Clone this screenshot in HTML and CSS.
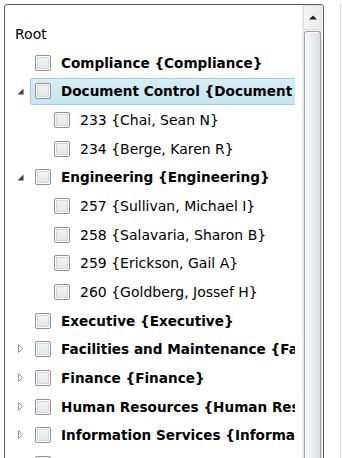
FILE: index.html
```html
<!DOCTYPE html>
<html lang="en">

<head>
    <meta charset="UTF-8">
    <meta name="viewport" content="width=device-width, initial-scale=1.0">
    <title>Tree</title>
    <link rel="stylesheet" href="styles.css">
</head>

<body>
    <div class="frame">
        <div class="tree">
            <div class="row root"><span class="label">Root</span></div>

            <div class="row lvl1">
                <span class="expander"></span>
                <span class="header"><span class="check"></span><span class="label bold">Compliance {Compliance}</span></span>
            </div>
            <div class="row lvl1">
                <span class="expander"><svg width="7" height="7" viewBox="0 0 7 7"><path d="M6.5 0.5 L6.5 6.5 L0.5 6.5 Z" fill="#3c3c3c" /></svg></span>
                <span class="header selected"><span class="check"></span><span class="label bold">Document Control {Document Control}</span></span>
            </div>
            <div class="row lvl2">
                <span class="expander"></span>
                <span class="header"><span class="check"></span><span class="label">233 {Chai, Sean N}</span></span>
            </div>
            <div class="row lvl2">
                <span class="expander"></span>
                <span class="header"><span class="check"></span><span class="label">234 {Berge, Karen R}</span></span>
            </div>
            <div class="row lvl1">
                <span class="expander"><svg width="7" height="7" viewBox="0 0 7 7"><path d="M6.5 0.5 L6.5 6.5 L0.5 6.5 Z" fill="#3c3c3c" /></svg></span>
                <span class="header"><span class="check"></span><span class="label bold">Engineering {Engineering}</span></span>
            </div>
            <div class="row lvl2">
                <span class="expander"></span>
                <span class="header"><span class="check"></span><span class="label">257 {Sullivan, Michael I}</span></span>
            </div>
            <div class="row lvl2">
                <span class="expander"></span>
                <span class="header"><span class="check"></span><span class="label">258 {Salavaria, Sharon B}</span></span>
            </div>
            <div class="row lvl2">
                <span class="expander"></span>
                <span class="header"><span class="check"></span><span class="label">259 {Erickson, Gail A}</span></span>
            </div>
            <div class="row lvl2">
                <span class="expander"></span>
                <span class="header"><span class="check"></span><span class="label">260 {Goldberg, Jossef H}</span></span>
            </div>
            <div class="row lvl1">
                <span class="expander"></span>
                <span class="header"><span class="check"></span><span class="label bold">Executive {Executive}</span></span>
            </div>
            <div class="row lvl1">
                <span class="expander"><svg width="7" height="10" viewBox="0 0 7 10"><path d="M1.5 0.5 L1.5 8.5 L5.5 4.5 Z" fill="#fff" stroke="#989898" /></svg></span>
                <span class="header"><span class="check"></span><span class="label bold">Facilities and Maintenance {Facilities and Maintenance}</span></span>
            </div>
            <div class="row lvl1">
                <span class="expander"><svg width="7" height="10" viewBox="0 0 7 10"><path d="M1.5 0.5 L1.5 8.5 L5.5 4.5 Z" fill="#fff" stroke="#989898" /></svg></span>
                <span class="header"><span class="check"></span><span class="label bold">Finance {Finance}</span></span>
            </div>
            <div class="row lvl1">
                <span class="expander"><svg width="7" height="10" viewBox="0 0 7 10"><path d="M1.5 0.5 L1.5 8.5 L5.5 4.5 Z" fill="#fff" stroke="#989898" /></svg></span>
                <span class="header"><span class="check"></span><span class="label bold">Human Resources {Human Resources}</span></span>
            </div>
            <div class="row lvl1">
                <span class="expander"><svg width="7" height="10" viewBox="0 0 7 10"><path d="M1.5 0.5 L1.5 8.5 L5.5 4.5 Z" fill="#fff" stroke="#989898" /></svg></span>
                <span class="header"><span class="check"></span><span class="label bold">Information Services {Information Services}</span></span>
            </div>
            <div class="row lvl1">
                <span class="expander"><svg width="7" height="10" viewBox="0 0 7 10"><path d="M1.5 0.5 L1.5 8.5 L5.5 4.5 Z" fill="#fff" stroke="#989898" /></svg></span>
                <span class="header"><span class="check"></span><span class="label bold">Marketing {Marketing}</span></span>
            </div>
        </div>

        <div class="scrollbar">
            <div class="scroll-btn"><svg width="8" height="5" viewBox="0 0 8 5"><path d="M0 4.5 L4 0.5 L8 4.5 Z" fill="#1e1e1e" /></svg></div>
            <div class="thumb"></div>
        </div>
    </div>
    <div class="side"></div>
</body>

</html>
```

FILE: styles.css
```css
body {
    margin: 0;
    padding: 4px 0 0 4px;
    display: flex;
    height: 458px;
    overflow: hidden;
    box-sizing: border-box;
    background: #fff;
    font-family: "DejaVu Sans", Verdana, sans-serif;
    font-size: 14px;
    color: #000;
}

.frame {
    display: flex;
    width: 320px;
    height: 480px;
    box-sizing: border-box;
    border: 1px solid #5c5c5c;
    border-radius: 3px 3px 0 0;
    background: #fff;
    flex-shrink: 0;
}

.side {
    width: 16px;
    border-right: 1px solid #dcdcdc;
}

.tree {
    width: 290px;
    margin-right: 7px;
    padding-top: 15.5px;
    overflow: hidden;
}

.row {
    display: flex;
    align-items: center;
    height: 28.7px;
    white-space: nowrap;
}

.root {
    padding-left: 10px;
    margin-top: -1px;
}

.lvl1 {
    padding-left: 6px;
}

.lvl2 {
    padding-left: 25px;
}

.expander {
    width: 19px;
    flex-shrink: 0;
    display: flex;
    align-items: center;
    justify-content: center;
}

.header {
    display: flex;
    align-items: center;
    height: 27px;
    box-sizing: border-box;
    padding: 0 4px;
    border: 1px solid transparent;
    border-radius: 2px;
    flex-shrink: 0;
}

.header.selected {
    background: linear-gradient(#d6edf5, #c6e5ef);
    border-color: #9dd0e2;
}

.check {
    width: 16px;
    height: 16px;
    box-sizing: border-box;
    border: 1px solid #8f9297;
    border-radius: 2px;
    background: linear-gradient(#f5f5f5, #e1e5ea);
    box-shadow: inset 0 0 0 1px #fdfdfd, inset 0 0 0 2px #d4d8de;
    margin-right: 10px;
    flex-shrink: 0;
}

.bold {
    font-weight: bold;
    font-size: 13.6px;
}

.scrollbar {
    width: 20px;
    display: flex;
    flex-direction: column;
    background: linear-gradient(to right, #e6e6e6, #f2f2f2 40%, #e9e9e9);
    border-left: 1px solid #ececec;
    box-sizing: border-box;
}

.scroll-btn {
    height: 23px;
    display: flex;
    align-items: center;
    justify-content: center;
    border: 1px solid #dcdcdc;
    border-radius: 2px;
    background: linear-gradient(to right, #f4f4f4, #eaeaea);
}

.thumb {
    flex: 1;
    margin: 1px 1px 0 1px;
    border: 1px solid #9ba4ad;
    border-bottom: none;
    border-radius: 3px 3px 0 0;
    background: linear-gradient(to right, #f6f6f6, #eef0f2 45%, #d7dce2);
    box-shadow: inset 1px 1px 0 #fff;
}
```
